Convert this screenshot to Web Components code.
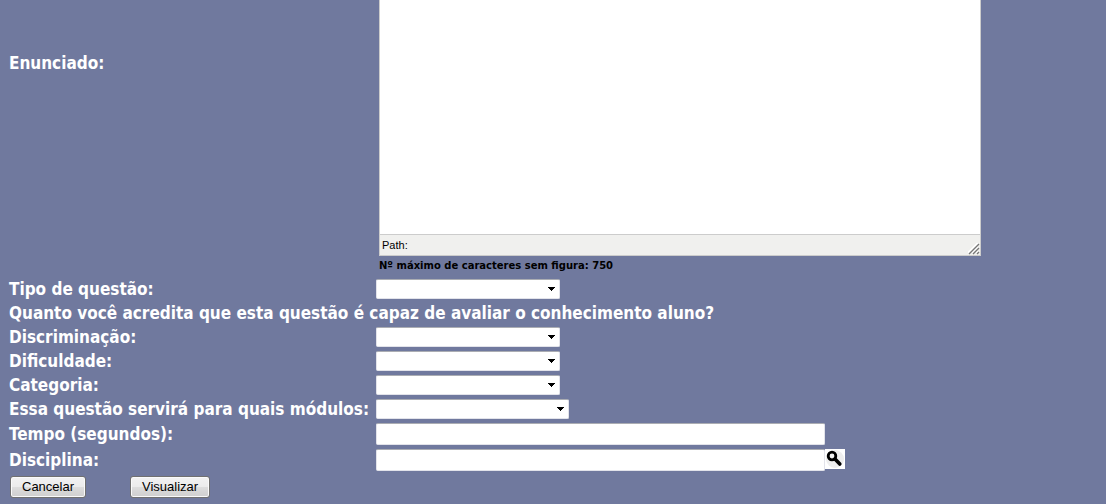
<!DOCTYPE html>
<html lang="pt">
<head>
<meta charset="utf-8">
<title>Questão</title>
<style>
  body {
    margin: 0;
    background: #70799e;
    color: #fff;
    font: bold 17px/20px "DejaVu Sans Condensed", "DejaVu Sans", sans-serif;
  }
</style>
</head>
<body>
<question-form></question-form>

<script>
const define = (name, html, setup) => {
  const template = document.createElement('template');
  template.innerHTML = html;
  customElements.define(name, class extends HTMLElement {
    constructor() {
      super();
      this.attachShadow({ mode: 'open' }).append(template.content.cloneNode(true));
    }
    connectedCallback() {
      if (setup) setup(this.shadowRoot, this);
    }
  });
};

const rowStyles = `
  :host { display: grid; grid-template-columns: 363px minmax(0, 1fr); column-gap: 4px; align-items: center; }
  label { white-space: nowrap; }
`;

const setLabel = (root, host) => {
  root.querySelector('label').textContent = host.getAttribute('label');
};

define('rich-editor', `
  <style>
    ${rowStyles}
    :host { align-items: start; }
    label { padding-top: 53px; }
    .side { padding-left: 3px; }
    .editor { max-width: 602px; box-sizing: border-box; border: 1px solid #ccc; border-top: 0; background: #fff; }
    textarea { display: block; box-sizing: border-box; width: 100%; height: 234px; margin: 0; padding: 4px; border: 0; outline: 0; resize: none; background: #fff; }
    .status { display: flex; justify-content: space-between; align-items: center; height: 20px; padding-left: 2px; border-top: 1px solid #ccc; background: #f0f0ee; color: #000; font: 11px/20px "Liberation Sans", sans-serif; }
    svg { align-self: flex-end; display: block; }
    p { margin: 0; color: #000; font: bold 10px/19px "DejaVu Sans", sans-serif; }
  </style>
  <label for="text"></label>
  <div class="side">
    <div class="editor">
      <textarea id="text"></textarea>
      <div class="status">
        <span>Path:</span>
        <svg width="12" height="12" viewBox="0 0 12 12" fill="none">
          <path d="M0 10L10 0M4 10L10 4M8 10L10 8" stroke="#fff" stroke-width="2"/>
          <path d="M1 11L11 1M5 11L11 5M9 11L11 9" stroke="#777" stroke-width="1.4"/>
        </svg>
      </div>
    </div>
    <p>Nº máximo de caracteres sem figura: 750</p>
  </div>
`, setLabel);

define('select-field', `
  <style>
    ${rowStyles}
    .box { display: grid; align-items: center; width: var(--select-width, 184px); }
    select, svg { grid-area: 1 / 1; }
    select { appearance: none; box-sizing: border-box; width: 100%; height: 20px; margin: 0; padding: 0 20px 0 4px; border: 1px solid #e2e3ea; border-top-color: #abadb3; border-radius: 2px; background: #fff; font: 13px "Liberation Sans", sans-serif; }
    svg { justify-self: end; margin-right: 5px; pointer-events: none; }
  </style>
  <label for="choice"></label>
  <div class="box">
    <select id="choice"><option></option></select>
    <svg width="7" height="4" viewBox="0 0 7 4" shape-rendering="crispEdges"><path d="M0 0H7V1H6V2H5V3H4V4H3V3H2V2H1V1H0Z" fill="#000"/></svg>
  </div>
`, setLabel);

define('text-field', `
  <style>
    ${rowStyles}
    .box { display: flex; align-items: flex-start; }
    input { box-sizing: border-box; flex: 0 1 449px; min-width: 0; height: 22px; margin: 0; padding: 0 4px; border: 1px solid #e2e3ea; border-top-color: #abadb3; border-radius: 2px; background: #fff; font: 13px "Liberation Sans", sans-serif; }
  </style>
  <label for="value"></label>
  <div class="box"><input id="value" type="text"><slot></slot></div>
`, setLabel);

define('search-button', `
  <style>
    :host { display: block; }
    button { display: block; width: 20px; height: 20px; margin: 0; padding: 0; border: 0; background: #fff; }
    svg { display: block; }
  </style>
  <button type="button" aria-label="Pesquisar">
    <svg width="20" height="20" viewBox="0 0 20 20">
      <circle cx="10" cy="10" r="9" fill="#eee"/>
      <circle cx="7" cy="7" r="3.8" fill="#f4f4f4" stroke="#000" stroke-width="2.8"/>
      <path d="M10 10L14.8 15" stroke="#000" stroke-width="3.6" stroke-linecap="round"/>
    </svg>
  </button>
`);

define('push-button', `
  <style>
    :host { display: block; }
    button { display: block; box-sizing: border-box; height: 22px; margin: 0; padding: 0 11px; border: 1px solid #707070; border-radius: 3px; background: linear-gradient(#f2f2f2, #ebebeb 50%, #ddd 50%, #cfcfcf); box-shadow: inset 0 0 0 1px #fafafa; color: #000; font: 13px/20px "Liberation Sans", sans-serif; }
  </style>
  <button type="button"><slot></slot></button>
`);

define('question-form', `
  <style>
    :host { display: block; padding-left: 9px; }
    form { display: grid; row-gap: 4px; }
    p { margin: 0; }
    .wide { --select-width: 193px; }
    .actions { display: flex; gap: 44px; padding: 1px; }
  </style>
  <form>
    <rich-editor label="Enunciado:"></rich-editor>
    <select-field label="Tipo de questão:"></select-field>
    <p>Quanto você acredita que esta questão é capaz de avaliar o conhecimento aluno?</p>
    <select-field label="Discriminação:"></select-field>
    <select-field label="Dificuldade:"></select-field>
    <select-field label="Categoria:"></select-field>
    <select-field class="wide" label="Essa questão servirá para quais módulos:"></select-field>
    <text-field label="Tempo (segundos):"></text-field>
    <text-field label="Disciplina:"><search-button></search-button></text-field>
    <div class="actions">
      <push-button>Cancelar</push-button>
      <push-button>Visualizar</push-button>
    </div>
  </form>
`);
</script>
</body>
</html>
